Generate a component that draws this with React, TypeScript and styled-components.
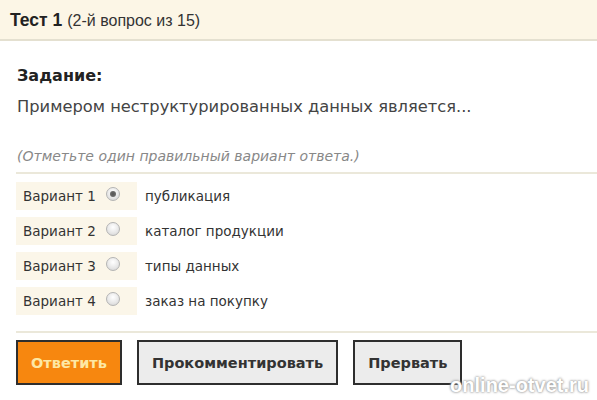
import styled, { createGlobalStyle } from 'styled-components';

const GlobalStyle = createGlobalStyle`
  html, body {
    margin: 0;
    padding: 0;
    background: #ffffff;
  }
  body {
    font-family: 'DejaVu Sans', Verdana, sans-serif;
    color: #333;
  }
`;

type Option = {
  id: number;
  text: string;
  checked?: boolean;
};

const options: Option[] = [
  { id: 1, text: 'публикация', checked: true },
  { id: 2, text: 'каталог продукции' },
  { id: 3, text: 'типы данных' },
  { id: 4, text: 'заказ на покупку' },
];

export default function App() {
  return (
    <>
      <GlobalStyle />
      <Page>
        <Header>
          <Title>Тест 1</Title>
          <Counter>(2-й вопрос из 15)</Counter>
        </Header>
        <Body>
          <TaskLabel>Задание:</TaskLabel>
          <Question>Примером неструктурированных данных является...</Question>
          <Hint>(Отметьте один правильный вариант ответа.)</Hint>
          <Options>
            {options.map((o) => (
              <OptionRow key={o.id}>
                <OptionLabel>
                  Вариант {o.id}
                  <Radio checked={!!o.checked} />
                </OptionLabel>
                <OptionText>{o.text}</OptionText>
              </OptionRow>
            ))}
          </Options>
          <Buttons>
            <Button primary>Ответить</Button>
            <Button>Прокомментировать</Button>
            <Button>Прервать</Button>
          </Buttons>
        </Body>
        <Watermark>online-otvet.ru</Watermark>
      </Page>
    </>
  );
}

const Page = styled.div`
  position: relative;
  width: 597px;
  height: 400px;
  overflow: hidden;
  background: #fff;
`;

const Header = styled.div`
  height: 41px;
  box-sizing: border-box;
  background: #fcf6e6;
  border-bottom: 2px solid #e4e0d0;
  display: flex;
  align-items: center;
  padding: 2px 10px 0;
`;

const Title = styled.span`
  font-family: 'Liberation Sans', Arial, sans-serif;
  font-weight: bold;
  font-size: 17.5px;
  color: #222;
  margin-right: 5px;
`;

const Counter = styled.span`
  font-family: 'Liberation Sans', Arial, sans-serif;
  font-size: 16px;
  color: #333;
`;

const Body = styled.div`
  padding: 24px 0 0 16px;
`;

const TaskLabel = styled.div`
  font-family: 'DejaVu Sans', Tahoma, sans-serif;
  font-weight: bold;
  font-size: 16px;
  color: #222;
  line-height: 22px;
  padding-left: 1px;
`;

const Question = styled.div`
  font-size: 16.3px;
  color: #444;
  line-height: 20px;
  margin-top: 10px;
  padding-left: 1px;
`;

const Hint = styled.div`
  font-style: italic;
  font-size: 14px;
  color: #888;
  line-height: 18px;
  margin-top: 30px;
  padding: 0 0 7px 1px;
  border-bottom: 2px solid #ebe8da;
`;

const Options = styled.div`
  display: flex;
  flex-direction: column;
  gap: 7px;
  padding: 8px 0 16px;
  border-bottom: 2px solid #ebe8da;
`;

const OptionRow = styled.div`
  display: flex;
  align-items: center;
  height: 28px;
`;

const OptionLabel = styled.div`
  display: flex;
  align-items: center;
  width: 121px;
  height: 100%;
  box-sizing: border-box;
  padding-left: 7px;
  background: #fbf6e9;
  font-size: 13.5px;
  color: #333;
  white-space: pre;
`;

const Radio = styled.span<{ checked: boolean }>`
  width: 14px;
  height: 14px;
  margin-left: 10px;
  margin-bottom: 5px;
  border-radius: 50%;
  box-sizing: border-box;
  border: 1px solid #b4b4b4;
  background: radial-gradient(circle at 50% 35%, #ffffff 0%, #e6e6e6 60%, #cfcfcf 100%);
  position: relative;
  ${({ checked }) =>
    checked &&
    `
    &::after {
      content: '';
      position: absolute;
      left: 3px;
      top: 3px;
      width: 6px;
      height: 6px;
      border-radius: 50%;
      background: radial-gradient(circle, #555 0%, #777 100%);
    }
  `}
`;

const OptionText = styled.div`
  font-size: 13.5px;
  color: #333;
  margin-left: 8px;
`;

const Buttons = styled.div`
  display: flex;
  gap: 15px;
  padding-top: 7px;
`;

const Button = styled.button<{ primary?: boolean }>`
  height: 45px;
  padding: 0 13px;
  border: 2px solid #2e2e2e;
  background: ${({ primary }) => (primary ? '#f7870f' : '#ececec')};
  color: ${({ primary }) => (primary ? '#fde8a4' : '#333')};
  font-family: 'DejaVu Sans', Tahoma, sans-serif;
  font-weight: bold;
  font-size: 14.5px;
  cursor: pointer;
`;

const Watermark = styled.div`
  position: absolute;
  right: 8px;
  bottom: 3px;
  font-family: 'Liberation Sans', Arial, sans-serif;
  font-weight: bold;
  font-size: 20px;
  color: #fff;
  text-shadow: 0 0 3px #999, 0 0 2px #999;
`;
